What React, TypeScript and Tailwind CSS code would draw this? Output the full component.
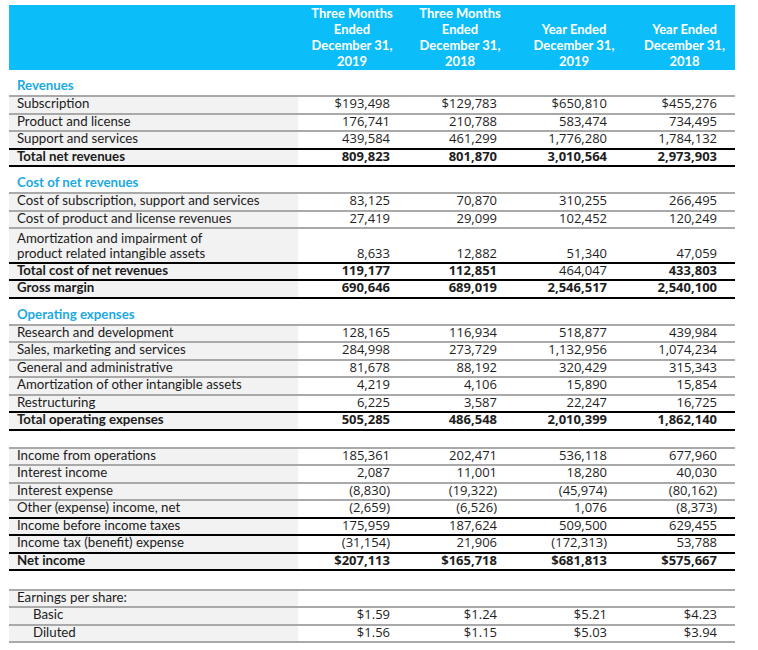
import React from 'react';

type Line = 'gray' | 'black';

type RowData = {
  label: string;
  values: string[];
  top: Line;
  bottom?: Line;
  bold?: boolean;
  plainCols?: number[];
  indent?: boolean;
  tall?: boolean;
};

// number columns: width + right padding
const COLS = ['w-[108px] pr-[16px]', 'w-[108px] pr-[17px]', 'w-[120px] pr-[27px]', 'w-[101px] pr-[18px]'];

const LABEL_FONT = { fontFamily: 'Lato, "Noto Sans", sans-serif' };
const NUM_FONT = { fontFamily: '"Open Sans", "Noto Sans", sans-serif' };

const revenues: RowData[] = [
  { label: 'Subscription', values: ['$193,498', '$129,783', '$650,810', '$455,276'], top: 'gray' },
  { label: 'Product and license', values: ['176,741', '210,788', '583,474', '734,495'], top: 'gray' },
  { label: 'Support and services', values: ['439,584', '461,299', '1,776,280', '1,784,132'], top: 'gray' },
  { label: 'Total net revenues', values: ['809,823', '801,870', '3,010,564', '2,973,903'], top: 'black', bottom: 'black', bold: true },
];

const costs: RowData[] = [
  { label: 'Cost of subscription, support and services', values: ['83,125', '70,870', '310,255', '266,495'], top: 'gray' },
  { label: 'Cost of product and license revenues', values: ['27,419', '29,099', '102,452', '120,249'], top: 'gray' },
  { label: 'Amortization and impairment of\nproduct related intangible assets', values: ['8,633', '12,882', '51,340', '47,059'], top: 'gray', tall: true },
  { label: 'Total cost of net revenues', values: ['119,177', '112,851', '464,047', '433,803'], top: 'black', bold: true, plainCols: [2] },
  { label: 'Gross margin', values: ['690,646', '689,019', '2,546,517', '2,540,100'], top: 'black', bottom: 'black', bold: true },
];

const opex: RowData[] = [
  { label: 'Research and development', values: ['128,165', '116,934', '518,877', '439,984'], top: 'gray' },
  { label: 'Sales, marketing and services', values: ['284,998', '273,729', '1,132,956', '1,074,234'], top: 'gray' },
  { label: 'General and administrative', values: ['81,678', '88,192', '320,429', '315,343'], top: 'gray' },
  { label: 'Amortization of other intangible assets', values: ['4,219', '4,106', '15,890', '15,854'], top: 'gray' },
  { label: 'Restructuring', values: ['6,225', '3,587', '22,247', '16,725'], top: 'gray' },
  { label: 'Total operating expenses', values: ['505,285', '486,548', '2,010,399', '1,862,140'], top: 'black', bottom: 'black', bold: true },
];

const income: RowData[] = [
  { label: 'Income from operations', values: ['185,361', '202,471', '536,118', '677,960'], top: 'gray' },
  { label: 'Interest income', values: ['2,087', '11,001', '18,280', '40,030'], top: 'gray' },
  { label: 'Interest expense', values: ['(8,830)', '(19,322)', '(45,974)', '(80,162)'], top: 'gray' },
  { label: 'Other (expense) income, net', values: ['(2,659)', '(6,526)', '1,076', '(8,373)'], top: 'gray' },
  { label: 'Income before income taxes', values: ['175,959', '187,624', '509,500', '629,455'], top: 'black' },
  { label: 'Income tax (benefit) expense', values: ['(31,154)', '21,906', '(172,313)', '53,788'], top: 'black' },
  { label: 'Net income', values: ['$207,113', '$165,718', '$681,813', '$575,667'], top: 'black', bottom: 'black', bold: true },
];

const eps: RowData[] = [
  { label: 'Earnings per share:', values: ['', '', '', ''], top: 'gray' },
  { label: 'Basic', values: ['$1.59', '$1.24', '$5.21', '$4.23'], top: 'gray', indent: true },
  { label: 'Diluted', values: ['$1.56', '$1.15', '$5.03', '$3.94'], top: 'gray', bottom: 'gray', indent: true },
];

function rowClass(r: RowData) {
  const top = r.top === 'black' ? 'border-t-2 border-t-black' : 'border-t-2 border-t-[#a9a9a9]';
  let bottom = '';
  if (r.bottom === 'black') bottom = 'border-b-2 border-b-black';
  if (r.bottom === 'gray') bottom = 'border-b-2 border-b-[#a9a9a9]';
  let height = r.tall ? 'h-[34.5px]' : 'h-[17.5px]';
  if (r.bottom) height = 'h-[19.5px]';
  return `flex ${top} ${bottom} ${height}`;
}

function Row({ r }: { r: RowData }) {
  const align = r.tall ? 'items-end pb-[1px]' : 'items-center pb-[2px]';
  return (
    <div className={rowClass(r)}>
      <div
        className={`flex w-[289px] ${align} bg-[#f2f2f2] text-[13.25px] leading-[15px] whitespace-pre-line text-[#1b1b1b] ${r.indent ? 'pl-[24px]' : 'pl-[8px]'} ${r.bold ? 'font-bold' : ''}`}
        style={LABEL_FONT}
      >
        {r.label}
      </div>
      {r.values.map((v, i) => (
        <div
          key={i}
          className={`flex ${COLS[i]} ${align} justify-end text-[13px] leading-[15px] text-[#1e1e1e] ${r.bold && !r.plainCols?.includes(i) ? 'font-bold' : ''}`}
          style={NUM_FONT}
        >
          {v}
        </div>
      ))}
    </div>
  );
}

function Heading({ title }: { title: string }) {
  return (
    <div className="flex h-[25px] items-end pb-[2px] pl-[8px] text-[13.25px] font-bold leading-[16px] text-[#1ba9e2]" style={LABEL_FONT}>
      {title}
    </div>
  );
}

const headers = [
  ['Three Months', 'Ended', 'December 31,', '2019'],
  ['Three Months', 'Ended', 'December 31,', '2018'],
  ['Year Ended', 'December 31,', '2019'],
  ['Year Ended', 'December 31,', '2018'],
];
const HEAD_COLS = ['w-[108px]', 'w-[108px]', 'w-[120px]', 'w-[101px]'];

export default function App() {
  return (
    <div className="min-h-[650px] w-[758px] bg-white pt-[5px]">
      <div className="ml-[9px] w-[726px]">
        {/* Header */}
        <div className="flex h-[65px] bg-[#0bbef9]">
          <div className="w-[289px]" />
          {headers.map((lines, i) => (
            <div
              key={i}
              className={`flex ${HEAD_COLS[i]} flex-col items-center justify-end pb-[1px] text-center text-[13px] font-bold leading-[16px] text-white`}
              style={LABEL_FONT}
            >
              {lines.map((l) => (
                <span key={l}>{l}</span>
              ))}
            </div>
          ))}
        </div>

        <Heading title="Revenues" />
        {revenues.map((r) => <Row key={r.label} r={r} />)}

        <Heading title="Cost of net revenues" />
        {costs.map((r) => <Row key={r.label} r={r} />)}

        <Heading title="Operating expenses" />
        {opex.map((r) => <Row key={r.label} r={r} />)}

        <div className="h-[16px]" />
        {income.map((r) => <Row key={r.label} r={r} />)}

        <div className="h-[17.5px]" />
        {eps.map((r) => <Row key={r.label} r={r} />)}
      </div>
    </div>
  );
}
